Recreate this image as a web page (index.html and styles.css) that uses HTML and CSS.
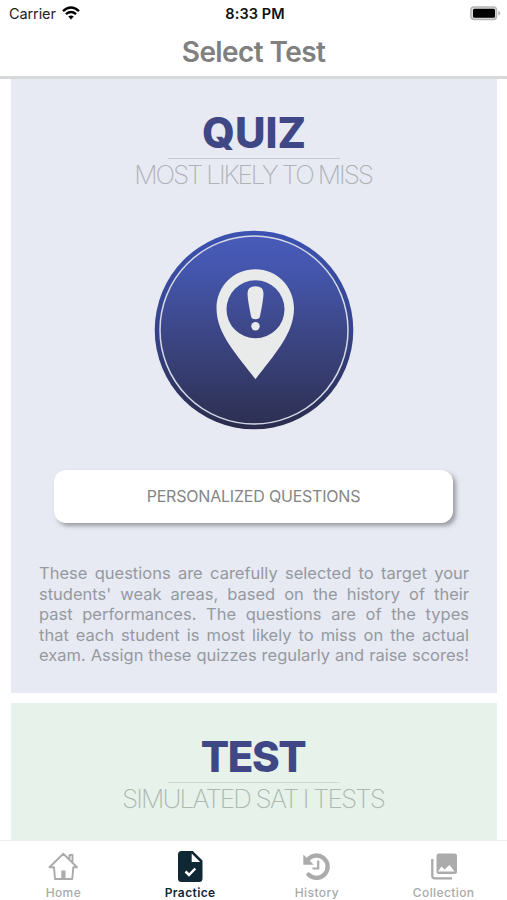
FILE: index.html
```html
<!DOCTYPE html>
<html lang="en">
<head>
<meta charset="utf-8">
<title>Select Test</title>
<link rel="stylesheet" href="styles.css">
</head>
<body>
<div class="app">
  <header class="header">
    <div class="status">
      <div class="carrier"><span>Carrier</span>
        <svg class="wifi" width="18" height="14" viewBox="0 0 18 14" fill="none" stroke="#000" stroke-width="2.4"><path d="M1 5.1Q9-1.9 17 5.1M3.9 8.2Q9 3.9 14.1 8.2"/><path d="M6.2 10.5Q9 8.3 11.8 10.5L9 13.5z" fill="#000" stroke="none"/></svg>
      </div>
      <div class="time">8:33 PM</div>
      <svg class="battery" width="31" height="15" viewBox="0 0 31 15"><rect x=".9" y=".9" width="25.6" height="12.6" rx="3.2" fill="#ddd" stroke="#b5b5b5" stroke-width="1.5"/><rect x="3" y="2.8" width="22" height="8.9" rx="1.5" fill="#000"/><path d="M28.3 4.8q2 .8 2 2.4t-2 2.4z" fill="#b5b5b5"/></svg>
    </div>
    <h1 class="title">Select Test</h1>
  </header>
  <main class="content">
    <section class="card quiz">
      <h2 class="name">QUIZ</h2>
      <div class="rule"></div>
      <p class="subtitle">MOST LIKELY TO MISS</p>
      <svg class="badge" width="200" height="200" viewBox="0 0 200 200">
        <defs>
          <linearGradient id="face" x1="0" y1="0" x2="0" y2="1"><stop offset="0" stop-color="#485bb9"/><stop offset=".2" stop-color="#4355ab"/><stop offset=".5" stop-color="#3d4788"/><stop offset="1" stop-color="#2d3052"/></linearGradient>
          <linearGradient id="rim" x1="0" y1="0" x2="0" y2="1"><stop offset="0" stop-color="#3c52b2"/><stop offset=".5" stop-color="#36448b"/><stop offset="1" stop-color="#292c4b"/></linearGradient>
        </defs>
        <circle cx="100" cy="100" r="99.3" fill="url(#rim)"/>
        <circle cx="100" cy="100" r="94" fill="url(#face)" stroke="#d5d8e5" stroke-width="1.5"/>
        <g transform="translate(.5 .3)" fill="#e9eaea">
          <path d="M101 39C79 39 62 56 62 78C62 104 83 125 101 149C119 125 139.500 104 139.500 78C139.500 56 122 39 101 39ZM101 50A29 29 0 1 1 101 108A29 29 0 1 1 101 50Z" fill-rule="evenodd"/>
          <path d="M93 63Q93 56 101 56T109 63Q109 69 105.500 86Q105 89 101 89T96.500 86Q93 69 93 63Z"/>
          <circle cx="101" cy="96" r="4.200"/>
        </g>
      </svg>
      <button class="choice">PERSONALIZED QUESTIONS</button>
      <p class="description">These questions are carefully selected to target your students' weak areas, based on the history of their past performances. The questions are of the types<br>that each student is most likely to miss on the actual<br>exam. Assign these quizzes regularly and raise scores!</p>
    </section>
    <section class="card test">
      <h2 class="name">TEST</h2>
      <div class="rule"></div>
      <p class="subtitle">SIMULATED SAT I TESTS</p>
    </section>
  </main>
  <nav class="tabs">
    <a class="tab"><svg width="32" height="32" viewBox="0 0 32 32" fill="none" stroke="#ababab" stroke-width="1.900"><path d="M2.500 16.200L16.300 2.700L30 16.200H26.300L25.300 28H8L7 16.200ZM22.500 8V4H25.500V11" stroke-linejoin="round"/><path d="M14.300 28V19.500H18.500V28Z" fill="#ababab" stroke="none"/></svg><span>Home</span></a>
    <a class="tab active"><svg width="32" height="32" viewBox="0 0 32 32"><path d="M7 0H18.800L28.500 9.500V27.500Q28.500 31 25 31H7.500Q4 31 4 27.500V3.500Q4 0 7.500 0Z" fill="#102734"/><path d="M17.700 2.500V11H26.200Z" fill="#fff"/><path d="M11.500 20.500L15 24L21.300 17.500" fill="none" stroke="#fff" stroke-width="2.500"/></svg><span>Practice</span></a>
    <a class="tab"><svg width="32" height="32" viewBox="0 0 32 32" fill="none" stroke="#ababab"><path d="M6.500 9A11.200 11.200 0 1 1 7.500 23.600" stroke-width="4.300" stroke-linecap="round"/><path d="M2.300 3.500V13.800H12.800Z" fill="#ababab" stroke="none"/><path d="M17.200 9.500V17.500H11.500" stroke-width="2.200"/></svg><span>History</span></a>
    <a class="tab"><svg width="32" height="32" viewBox="0 0 32 32"><rect x="8.500" y="2.500" width="20.500" height="20.500" rx="2.500" fill="#ababab"/><path d="M10 20.500L13.500 15.500L16.500 18.500L21.500 14L26.500 20.500Z" fill="#fff"/><path d="M4.300 8V25Q4.300 27.300 6.600 27.300H24" fill="none" stroke="#ababab" stroke-width="2.300"/></svg><span>Collection</span></a>
  </nav>
</div>
</body>
</html>
```
FILE: styles.css
```css
* { box-sizing: border-box; }
body { margin: 0; background: #fff; font-family: Inter, "Liberation Sans", sans-serif; }
h1, h2, p { margin: 0; }
svg { display: block; flex: none; }
.app { height: 900px; display: flex; flex-direction: column; overflow: hidden; }
.header { height: 79px; flex: none; border-bottom: 3px solid #d7d8da; }
.status { height: 28px; padding: 0 6px 0 9px; display: grid; grid-template-columns: 1fr auto 1fr; align-items: center; font-size: 14.500px; line-height: 28px; color: #222; }
.carrier { display: flex; align-items: center; gap: 6px; letter-spacing: -.1px; }
.wifi { position: relative; top: -1px; }
.time { font-weight: 600; color: #111; letter-spacing: .1px; }
.battery { justify-self: end; position: relative; top: -1px; }
.title { height: 48px; line-height: 49px; text-align: center; font-size: 28px; font-weight: 600; color: #808080; letter-spacing: -.6px; }
.content { flex: 1; min-height: 0; padding: 0 10px 0 11px; display: flex; flex-direction: column; gap: 10px; overflow: hidden; }
.card { flex: none; display: flex; flex-direction: column; align-items: center; }
.quiz { height: 614px; padding-top: 29px; background: #e7eaf3; }
.test { height: 300px; padding-top: 29px; background: #e6f2ea; }
.name { height: 50px; line-height: 50px; font-size: 42px; font-weight: 800; color: #3f4785; }
.test .name { letter-spacing: -1.400px; margin-right: 2px; }
.rule { width: 172px; height: 1px; background: #c6c9d1; }
.test .rule { background: #d0dbd4; }
.subtitle { height: 32px; line-height: 32px; font-size: 26px; font-weight: 200; color: #b0b2b7; letter-spacing: -2.100px; text-indent: -2px; white-space: nowrap; }
.test .subtitle { color: #adb9b1; letter-spacing: -1.850px; }
.badge { margin-top: 39px; }
.choice { margin: 40px 1px 0 0; width: 399px; height: 53px; border: 0; border-radius: 12px; background: #fff; box-shadow: 3px 3px 4px rgba(80, 80, 85, .5); font: 400 16px Inter, sans-serif; letter-spacing: -.2px; color: #858585; padding: 0 0 2px; }
.description { width: 430px; margin-top: 40px; font-size: 16.500px; line-height: 20.500px; text-align: justify; text-align-last: justify; color: #96999f; }
.tabs { height: 60px; flex: none; display: grid; grid-template-columns: repeat(4, 1fr); border-top: 1px solid #eee; background: #fff; }
.tab { display: flex; flex-direction: column; align-items: center; padding-top: 10px; font-size: 12px; line-height: 19px; font-weight: 500; color: #aaa; letter-spacing: .4px; }
.active { color: #102734; font-weight: 600; }
```
